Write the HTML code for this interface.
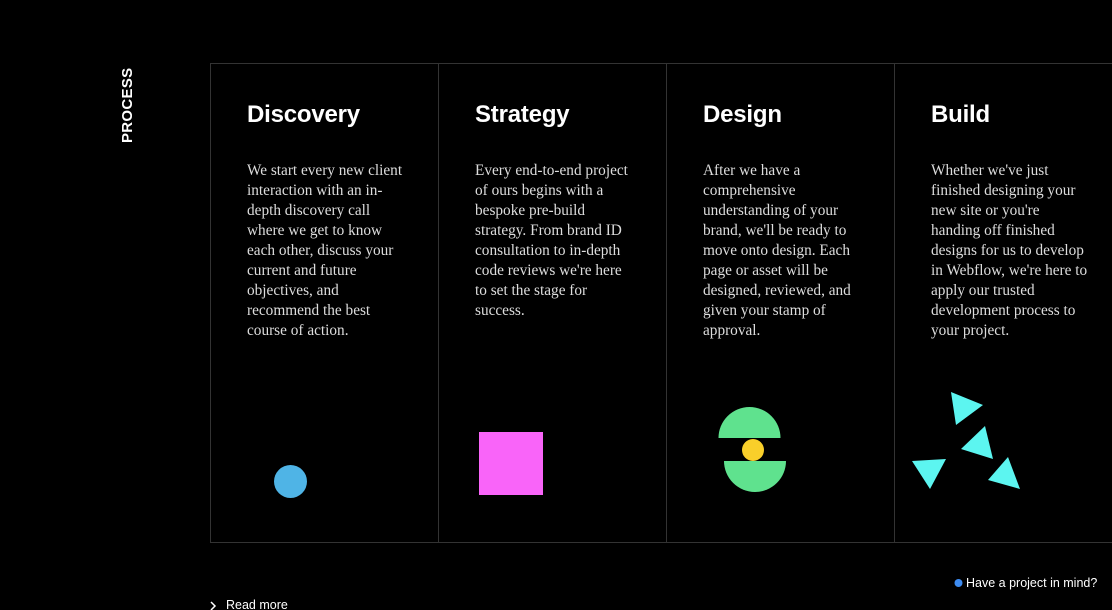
<!DOCTYPE html>
<html><head><meta charset="utf-8"><style>
html,body{margin:0;padding:0;background:#000;width:1112px;height:610px;overflow:hidden;position:relative}
.proc{position:absolute;left:119px;top:143px;transform-origin:0 0;transform:rotate(-90deg);color:#fff;font-family:"Liberation Sans",sans-serif;font-weight:bold;font-size:15px;letter-spacing:0.3px;white-space:nowrap}
.col{position:absolute;top:63px;height:478px;width:227px;border:1px solid #333;border-right:none}
h2{position:absolute;left:36px;top:37px;margin:0;color:#fff;font-family:"Liberation Sans",sans-serif;font-weight:bold;font-size:24px;letter-spacing:-0.2px}
p{position:absolute;left:36px;top:97px;margin:0;white-space:nowrap;color:#ddd;font-family:"Liberation Serif",serif;font-size:15.3px;line-height:20px}
.foot{position:absolute;color:#fff;font-family:"Liberation Sans",sans-serif;font-size:12.5px}
</style></head><body>
<div class="proc">PROCESS</div>
<div class="col" style="left:210px"><h2>Discovery</h2><p>We start every new client<br>interaction with an in-<br>depth discovery call<br>where we get to know<br>each other, discuss your<br>current and future<br>objectives, and<br>recommend the best<br>course of action.</p></div>
<div class="col" style="left:438px"><h2>Strategy</h2><p>Every end-to-end project<br>of ours begins with a<br>bespoke pre-build<br>strategy. From brand ID<br>consultation to in-depth<br>code reviews we're here<br>to set the stage for<br>success.</p></div>
<div class="col" style="left:666px"><h2>Design</h2><p>After we have a<br>comprehensive<br>understanding of your<br>brand, we'll be ready to<br>move onto design. Each<br>page or asset will be<br>designed, reviewed, and<br>given your stamp of<br>approval.</p></div>
<div class="col" style="left:894px;width:240px"><h2>Build</h2><p>Whether we've just<br>finished designing your<br>new site or you're<br>handing off finished<br>designs for us to develop<br>in Webflow, we're here to<br>apply our trusted<br>development process to<br>your project.</p></div>
<svg style="position:absolute;left:0;top:0" width="1112" height="610">
<circle cx="290.5" cy="481.5" r="16.5" fill="#4fb4e6"/>
<rect x="479" y="432" width="64" height="63" fill="#f964f9"/>
<path d="M718.5 438 A31 31 0 0 1 780.5 438 Z" fill="#5fe28e"/>
<path d="M724 461 A31 31 0 0 0 786 461 Z" fill="#5fe28e"/>
<circle cx="753" cy="450" r="11" fill="#f9cf2a"/>
<g fill="#5cf5f0">
<polygon points="951,392 983,405 956,425"/>
<polygon points="961,449 985,426 993,459"/>
<polygon points="912,461 946,459 930,489"/>
<polygon points="988,480 1008,457 1020,489"/>
</g>
<path d="M211 602 L215 606 L211 610" stroke="#fff" stroke-width="1.5" fill="none"/>
<circle cx="958.5" cy="583" r="4" fill="#3d8bf0"/>
</svg>
<div class="foot" style="left:226px;top:598px">Read more</div>
<div class="foot" style="left:966px;top:576px">Have a project in mind?</div>
</body></html>
